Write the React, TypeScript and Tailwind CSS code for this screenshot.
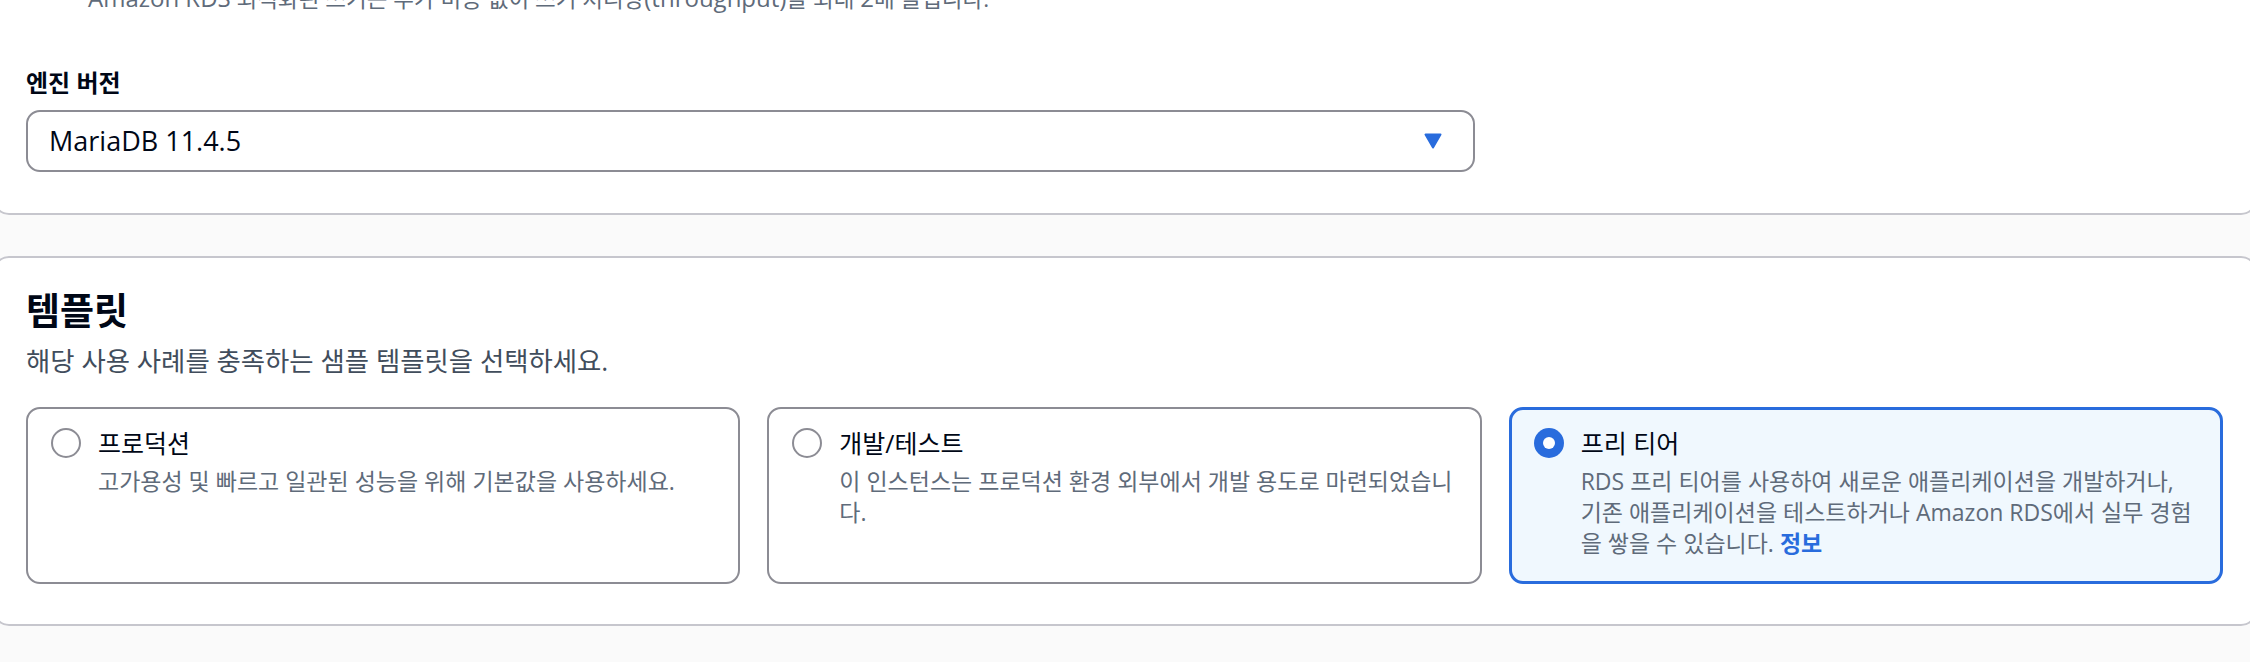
const Radio = ({ checked }: { checked?: boolean }) =>
  checked ? (
    <div className="w-[30px] h-[30px] rounded-full bg-[#296cdd] flex items-center justify-center shrink-0 mt-[1px]">
      <div className="w-[12px] h-[12px] rounded-full bg-white" />
    </div>
  ) : (
    <div className="w-[30px] h-[30px] rounded-full border-2 border-[#8c8c94] bg-white shrink-0 mt-[1px]" />
  );

const Latin = ({ children }: { children: React.ReactNode }) => (
  <span className="text-[24px]">{children}</span>
);

const App = () => {
  return (
    <div className="min-h-[662px] bg-[#fafafa] overflow-hidden font-['Open_Sans','Noto_Sans_CJK_KR',sans-serif] text-[#000716]">
      {/* 엔진 옵션 섹션 (위쪽이 잘린 카드) */}
      <div className="mx-[-7px] flex flex-col bg-white border-2 border-t-0 border-[#c6c6cd] rounded-b-[16px] px-[31px] pb-[41px]">
        <div className="ml-[62px] mt-[-18px] h-[32px] text-[22.5px] leading-[32px] text-[#5f6b7a] whitespace-nowrap">
          <Latin>Amazon RDS</Latin> 최적화된 쓰기는 추가 비용 없이 쓰기 처리량
          <Latin>(throughput)</Latin>을 최대 <Latin>2</Latin>배 늘립니다.
        </div>
        <div className="mt-[53px] text-[24px] leading-[32px] font-bold">엔진 버전</div>
        <div className="mt-[11px] w-[1449px] h-[62px] border-2 border-[#8c8c94] rounded-[14px] flex items-center justify-between pl-[21px] pr-[31px]">
          <span className="text-[27px]">MariaDB 11.4.5</span>
          <svg width="18" height="16" viewBox="0 0 18 16">
            <polygon
              points="1.5,1.5 16.5,1.5 9,14.5"
              fill="#296cdd"
              stroke="#296cdd"
              strokeWidth="2"
              strokeLinejoin="round"
            />
          </svg>
        </div>
      </div>

      {/* 템플릿 섹션 */}
      <div className="mt-[41px] mx-[-7px] bg-white border-2 border-[#c6c6cd] rounded-[16px] px-[31px] pt-[31px] pb-[40px]">
        <h2 className="text-[37px] leading-[44px] font-bold">템플릿</h2>
        <p className="mt-[12px] text-[26.4px] leading-[32px] text-[#414d5c]">
          해당 사용 사례를 충족하는 샘플 템플릿을 선택하세요.
        </p>
        <div className="mt-[30px] grid grid-cols-3 gap-[27px] w-[2197px]">
          <div className="h-[177px] border-2 border-[#8c8c94] rounded-[14px] pl-[23px] pt-[18px] flex gap-[17px]">
            <Radio />
            <div className="flex flex-col">
              <div className="text-[25px] leading-[32px]">프로덕션</div>
              <div className="mt-[7px] text-[23px] leading-[31px] text-[#5f6b7a] whitespace-nowrap">
                고가용성 및 빠르고 일관된 성능을 위해 기본값을 사용하세요.
              </div>
            </div>
          </div>
          <div className="h-[177px] border-2 border-[#8c8c94] rounded-[14px] pl-[23px] pt-[18px] flex gap-[17px]">
            <Radio />
            <div className="flex flex-col">
              <div className="text-[25px] leading-[32px]">개발/테스트</div>
              <div className="mt-[7px] text-[23px] leading-[31px] text-[#5f6b7a] whitespace-nowrap">
                <div>이 인스턴스는 프로덕션 환경 외부에서 개발 용도로 마련되었습니</div>
                <div>다.</div>
              </div>
            </div>
          </div>
          <div className="h-[177px] border-[3px] border-[#296cdd] bg-[#f0f8fe] rounded-[14px] pl-[22px] pt-[17px] flex gap-[17px]">
            <Radio checked />
            <div className="flex flex-col">
              <div className="text-[25px] leading-[32px]">프리 티어</div>
              <div className="mt-[7px] text-[23px] leading-[31px] text-[#5f6b7a] whitespace-nowrap">
                <div>RDS 프리 티어를 사용하여 새로운 애플리케이션을 개발하거나,</div>
                <div>기존 애플리케이션을 테스트하거나 Amazon RDS에서 실무 경험</div>
                <div>
                  을 쌓을 수 있습니다. <span className="font-bold text-[#296cdd]">정보</span>
                </div>
              </div>
            </div>
          </div>
        </div>
      </div>
    </div>
  );
};

export default App;
